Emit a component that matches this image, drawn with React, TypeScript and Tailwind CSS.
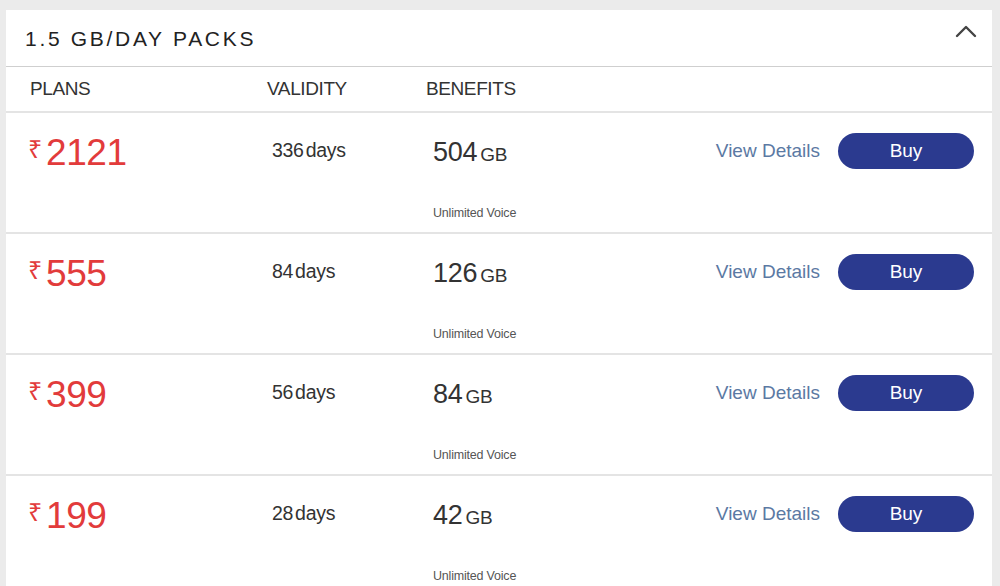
const plans = [
  { price: "2121", days: "336", data: "504" },
  { price: "555", days: "84", data: "126" },
  { price: "399", days: "56", data: "84" },
  { price: "199", days: "28", data: "42" },
];

const PlanRow = ({ price, days, data }: { price: string; days: string; data: string }) => {
  return (
    <div className="h-[121px] border-t-2 border-[#e4e4e4] flex items-start pt-[18px]">
      <div className="w-[266px] pl-[22px] pt-[2px] flex items-start text-[#e23b3b]">
        <span className="text-[25px] leading-none mt-[4px] mr-[4px]">₹</span>
        <span className="text-[37px] leading-[40px] tracking-[-0.4px]">{price}</span>
      </div>
      <div className="w-[161px] pt-[10px] text-[19.5px] text-[#333] tracking-[-0.3px] leading-none">
        {days}
        <span className="ml-[2px]">days</span>
      </div>
      <div className="flex-1 flex flex-col">
        <div className="flex items-baseline text-[#333] pt-[3px]">
          <span className="text-[27px] leading-[36px] tracking-[-0.3px]">{data}</span>
          <span className="text-[19px] ml-[3px] tracking-[-0.3px]">GB</span>
        </div>
        <div className="mt-[34px] text-[12.5px] text-[#555] tracking-[-0.2px]">Unlimited Voice</div>
      </div>
      <div className="flex items-center gap-[18px] pr-[18px] pt-[2px]">
        <span className="text-[19px] text-[#5b79a3]">View Details</span>
        <button className="w-[136px] h-[36px] rounded-full bg-[#2b3a8f] text-white text-[19px]">Buy</button>
      </div>
    </div>
  );
};

export default function App() {
  return (
    <div
      className="w-[1000px] h-[586px] bg-[#ebebeb] pt-[10px] pl-[6px] pr-[8px] overflow-hidden"
      style={{ fontFamily: "'Liberation Sans', Arial, sans-serif" }}
    >
      <div className="bg-white h-[600px]">
        <div className="h-[57px] flex items-center justify-between pl-[19px] pr-[14px] border-b border-[#cfcfcf]">
          <span className="text-[21px] tracking-[2.7px] text-[#222] pt-[2px]">1.5 GB/DAY PACKS</span>
          {/* collapse chevron */}
          <svg width="24" height="16" viewBox="0 0 24 16" className="-mt-[14px]" fill="none">
            <polyline points="3,13 12,4 21,13" stroke="#444" strokeWidth="2.4" strokeLinecap="round" strokeLinejoin="round" />
          </svg>
        </div>
        <div className="h-[44px] flex items-center text-[19px] text-[#333] tracking-[-0.4px]">
          <span className="w-[261px] pl-[24px]">PLANS</span>
          <span className="w-[159px]">VALIDITY</span>
          <span>BENEFITS</span>
        </div>
        {plans.map((p) => (
          <PlanRow key={p.price} {...p} />
        ))}
      </div>
    </div>
  );
}
